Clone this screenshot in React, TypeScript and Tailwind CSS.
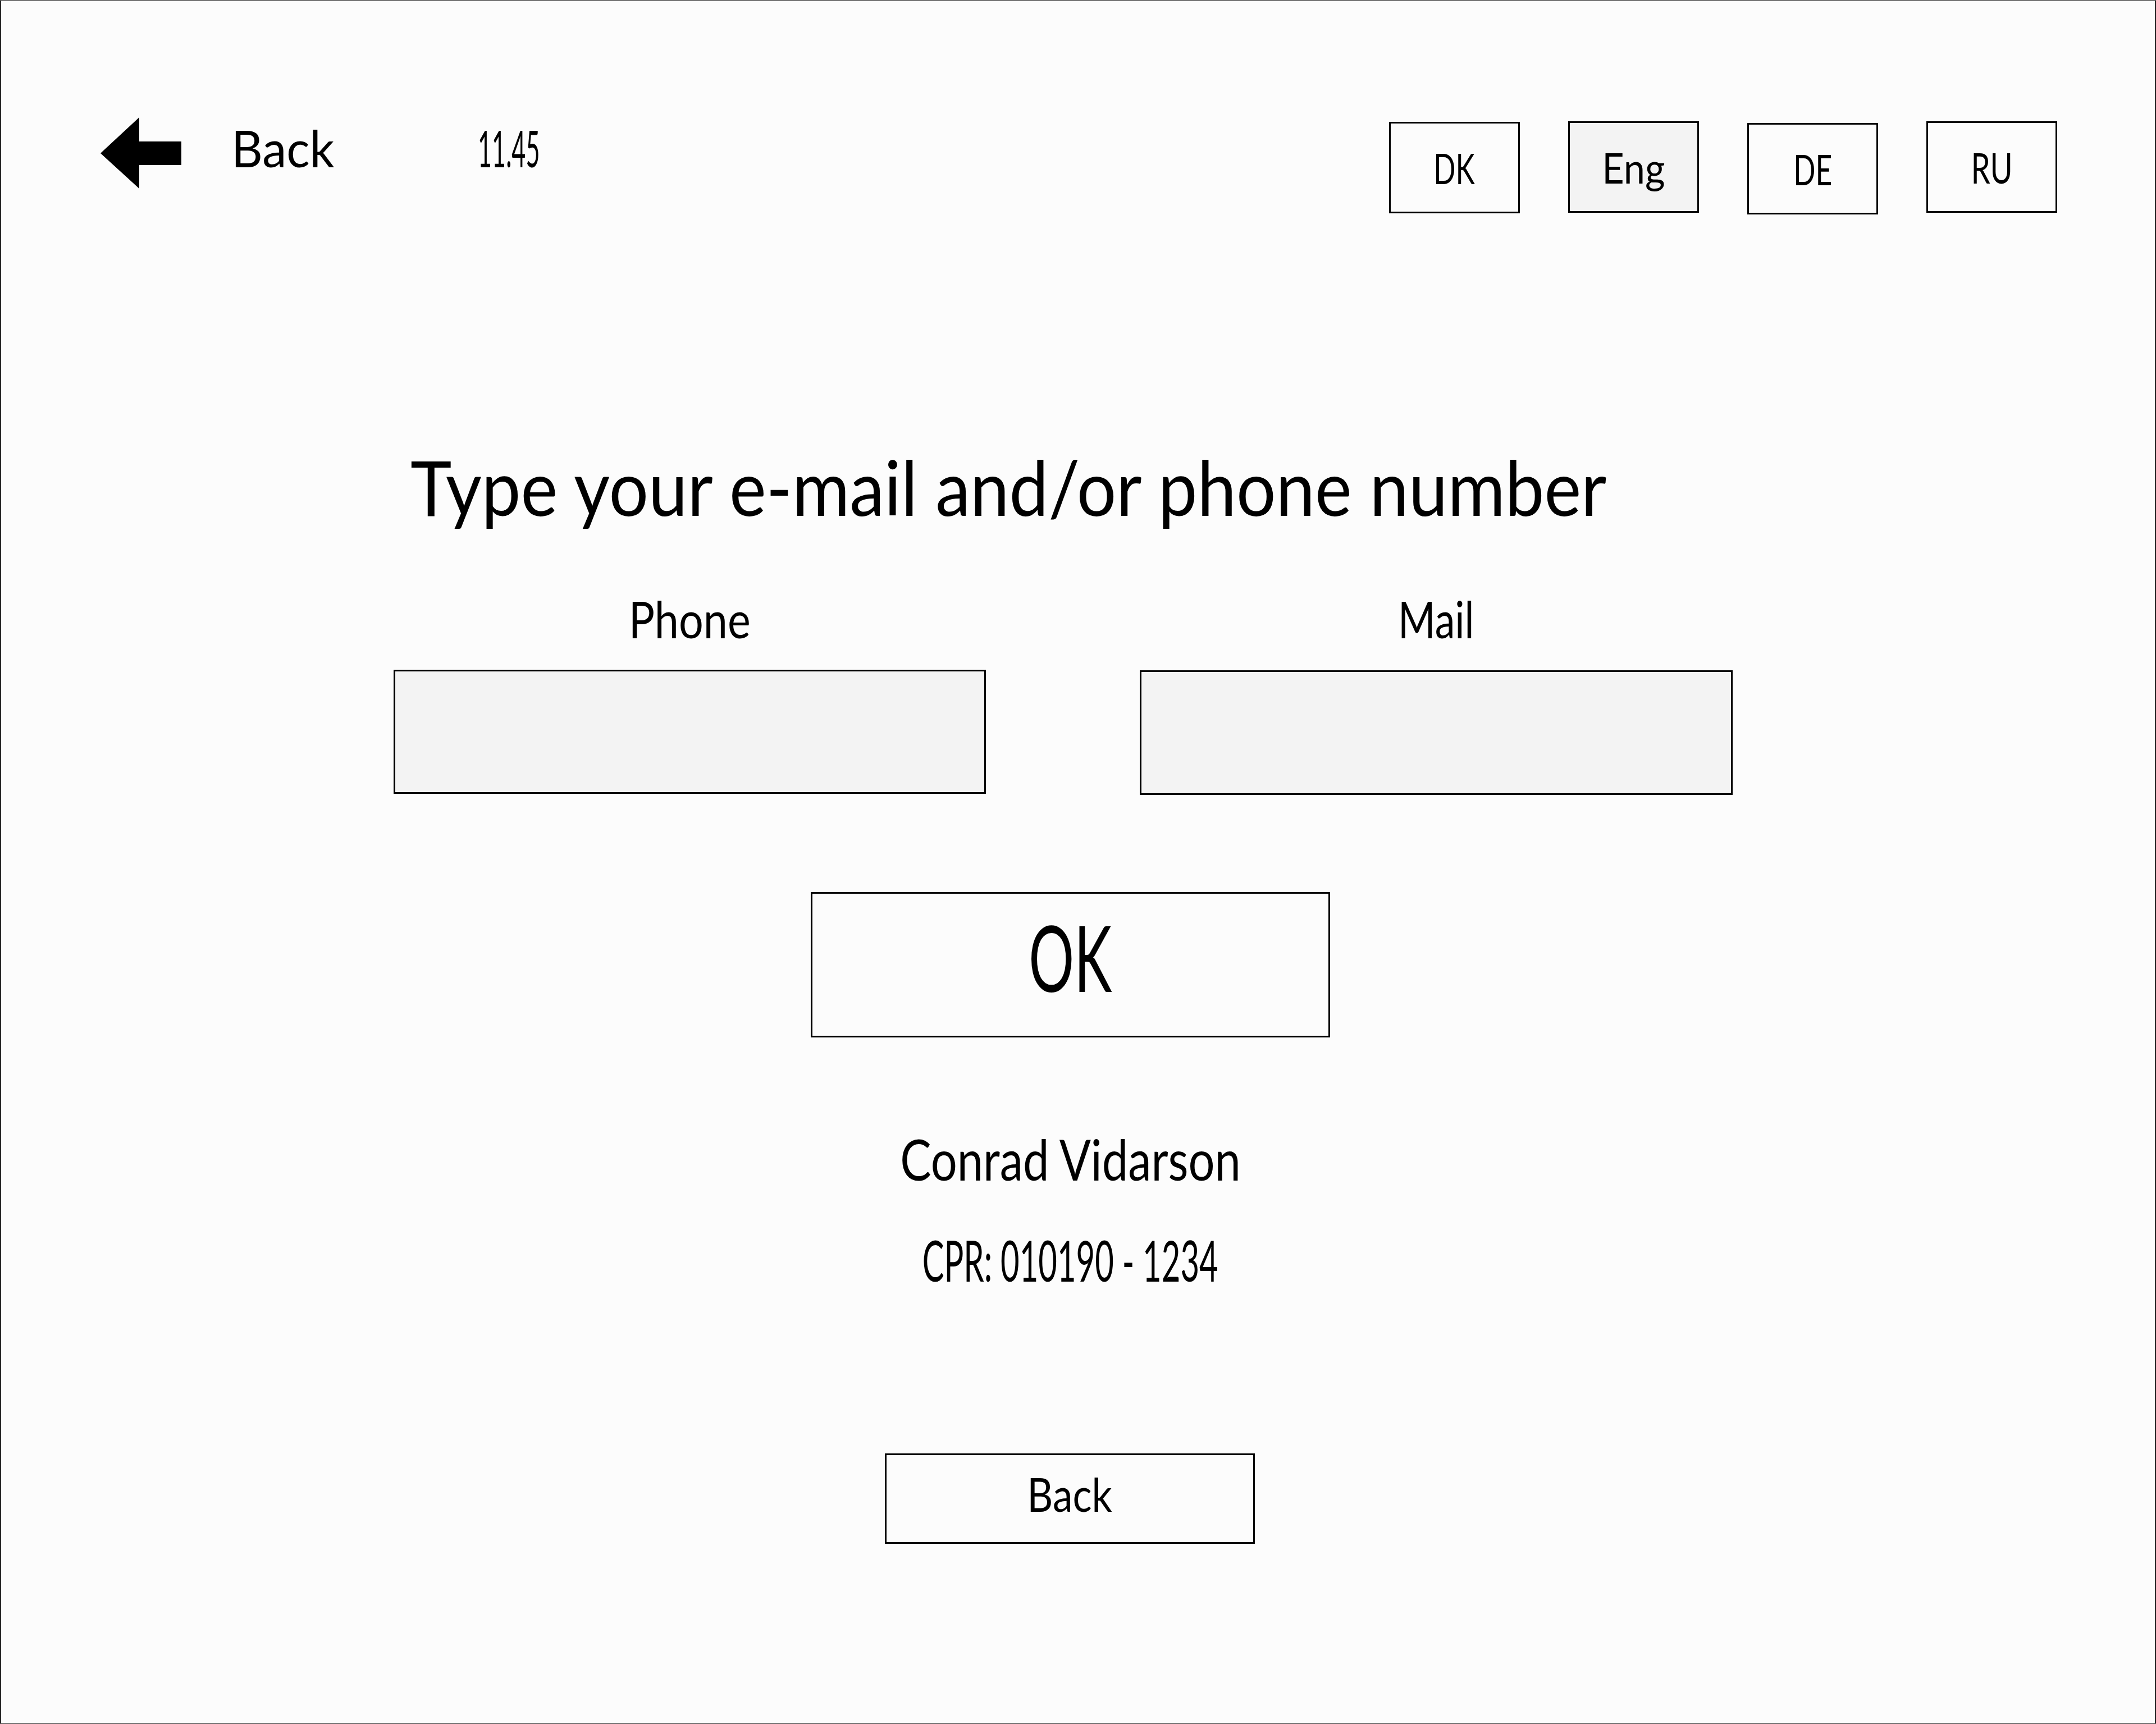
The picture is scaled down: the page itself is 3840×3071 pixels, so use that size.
const face = "font-['Lato','Liberation_Sans',sans-serif] font-normal";

function Lang({ label, active, className, squeeze }: { label: string; active?: boolean; className: string; squeeze: string }) {
  return (
    <div className={`w-[233px] h-[163px] border-[3px] border-black flex items-center justify-center text-[76px] leading-none ${active ? "bg-[#f3f3f3]" : ""} ${className}`}>
      <span className={`inline-block ${squeeze}`}>{label}</span>
    </div>
  );
}

export default function App() {
  return (
    <div className={`w-[3840px] h-[3071px] box-border border-x-2 border-x-[#222] border-y-2 border-y-[#777] bg-[#fcfcfc] text-black flex flex-col ${face}`}>
      <header className="flex items-start h-[412px] pl-[177px] pr-[174px] pt-[207px]">
        <svg width="144" height="127" viewBox="0 0 144 127" className="shrink-0">
          <polygon points="0,64 69,0 69,43 144,43 144,85 69,85 69,127" fill="#000" />
        </svg>
        <span className="ml-[89px] mt-[8px] text-[92px] leading-[92px] inline-block origin-left scale-x-[.94]">Back</span>
        <span className="ml-[244px] mt-[8px] text-[92px] leading-[92px] inline-block origin-left scale-x-[.47]">11.45</span>
        <div className="ml-auto flex items-start gap-[86px] pt-[7px]">
          <Lang label="DK" className="mt-[1px]" squeeze="scale-x-[.68]" />
          <Lang label="Eng" active squeeze="scale-x-[.9]" />
          <Lang label="DE" className="mt-[3px]" squeeze="scale-x-[.68]" />
          <Lang label="RU" squeeze="scale-x-[.72]" />
        </div>
      </header>
      <main className="flex flex-col items-center">
        <h1 className="w-[3836px] pl-[729px] text-[136px] leading-[150px] mt-[378px] font-normal whitespace-nowrap">
          <span className="inline-block origin-left scale-x-[.915]">Type your e-mail and/or phone number</span>
        </h1>
        <div className="flex gap-[274px] mt-[114px] ml-[-53px]">
          <div className="flex flex-col items-center">
            <span className="text-[92px] leading-[92px] inline-block scale-x-[.84]">Phone</span>
            <div className="mt-[45px] w-[1055px] h-[221px] border-[3px] border-black bg-[#f3f3f3]" />
          </div>
          <div className="flex flex-col items-center">
            <span className="text-[92px] leading-[92px] inline-block scale-x-[.78]">Mail</span>
            <div className="mt-[46px] w-[1056px] h-[222px] border-[3px] border-black bg-[#f3f3f3]" />
          </div>
        </div>
        <div className="mt-[173px] ml-[-27px] w-[925px] h-[259px] pb-[28px] border-[3px] border-black flex items-center justify-center text-[163px] leading-none font-normal">
          <span className="inline-block scale-x-[.62]">OK</span>
        </div>
        <div className="mt-[161px] ml-[-27px] text-[100px] leading-[110px] font-normal inline-block scale-x-[.83]">Conrad Vidarson</div>
        <div className="mt-[70px] ml-[-27px] text-[100px] leading-[110px] font-normal inline-block scale-x-[.58]">CPR: 010190 - 1234</div>
        <div className="mt-[290px] ml-[-29px] w-[659px] h-[161px] pb-[17px] border-[3px] border-black flex items-center justify-center text-[84px] leading-none font-normal">
          <span className="inline-block scale-x-[.85]">Back</span>
        </div>
      </main>
    </div>
  );
}
